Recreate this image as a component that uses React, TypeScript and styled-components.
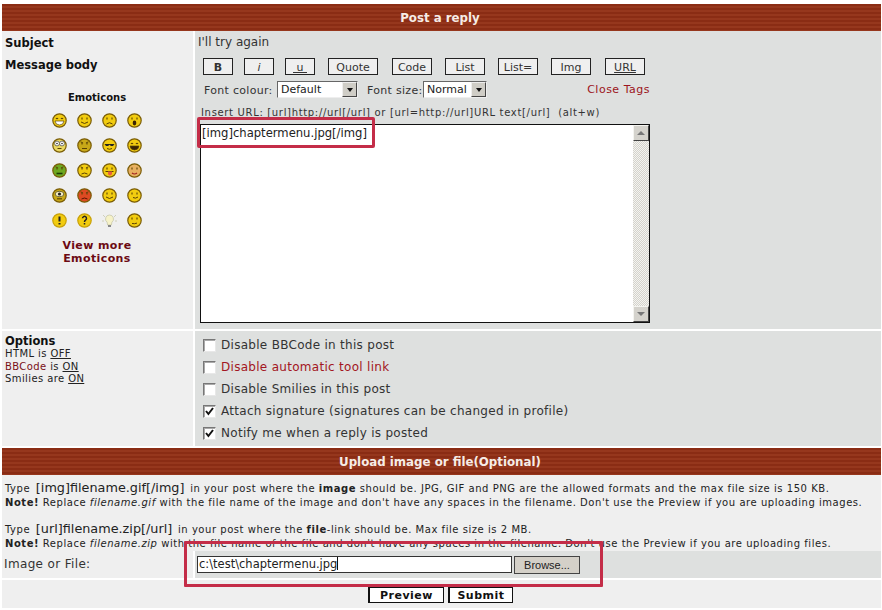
import React, { FC } from "react";
import styled, { createGlobalStyle } from "styled-components";

const GlobalStyle = createGlobalStyle`
  html, body {
    margin: 0;
    padding: 0;
    background: #ffffff;
  }
  body {
    font-family: "DejaVu Sans", Verdana, sans-serif;
    font-size: 11px;
    color: #222;
  }
`;

const Page = styled.div`
  position: relative;
  width: 882px;
  height: 610px;
  overflow: hidden;
  padding: 4px 1px 0 2px;
  box-sizing: border-box;
`;

const TitleBar = styled.div<{ $top?: number }>`
  height: 27px;
  margin-top: ${(p) => p.$top ?? 0}px;
  padding-right: 3px;
  display: flex;
  align-items: center;
  justify-content: center;
  color: #f6ece6;
  font-weight: 700;
  font-size: 11.8px;
  background: repeating-linear-gradient(to bottom, #8a2c14 0, #8a2c14 2px, #96371d 2px, #96371d 4px);
`;

const Row = styled.div<{ $height: number; $top?: number }>`
  display: grid;
  grid-template-columns: 191px 1fr;
  column-gap: 2px;
  height: ${(p) => p.$height}px;
  margin-top: ${(p) => p.$top ?? 0}px;
`;

const LeftCell = styled.div`
  background: #efefef;
  padding: 2px 3px;
  box-sizing: border-box;
  min-width: 0;
`;

const RightCell = styled.div`
  background: #dee0df;
  padding: 0 5px;
  box-sizing: border-box;
  min-width: 0;
`;

const RowLabel = styled.div`
  font-weight: 700;
  font-size: 11.5px;
  line-height: 18px;
  margin-top: 1px;
  color: #111;
`;

const SubjectValue = styled.div`
  font-size: 12px;
  line-height: 22px;
  margin-left: -2px;
  color: #333;
`;

const EmoticonPanel = styled.div`
  display: flex;
  flex-direction: column;
  align-items: center;
  padding-top: 17px;
  width: 184px;
`;

const EmoticonTitle = styled.div`
  font-weight: 700;
  font-size: 10px;
  line-height: 14px;
  color: #111;
`;

const EmoticonGrid = styled.div`
  display: grid;
  grid-template-columns: repeat(4, 15px);
  grid-auto-rows: 15px;
  column-gap: 10px;
  row-gap: 10px;
  margin-top: 8px;
`;

const MoreLink = styled.div`
  margin-top: 11px;
  text-align: center;
  font-weight: 700;
  font-size: 11px;
  line-height: 13px;
  letter-spacing: 0.4px;
  color: #6c0a14;
`;

const ButtonBar = styled.div`
  display: flex;
  align-items: center;
  height: 17px;
  margin: 5px 0 0 3px;
`;

const TagButton = styled.div<{ $width: number; $gap: number; $bold?: boolean; $under?: boolean; $italic?: boolean }>`
  box-sizing: border-box;
  width: ${(p) => p.$width}px;
  height: 17px;
  margin-right: ${(p) => p.$gap}px;
  padding-top: 1px;
  border: 1px solid #222;
  background: #efefef;
  display: flex;
  align-items: center;
  justify-content: center;
  font-size: 11px;
  color: #333;
  white-space: pre;
  font-weight: ${(p) => (p.$bold ? 700 : 400)};
  font-style: ${(p) => (p.$italic ? "italic" : "normal")};
  text-decoration: ${(p) => (p.$under ? "underline" : "none")};
`;

const FontRow = styled.div`
  display: flex;
  align-items: center;
  width: 446px;
  height: 17px;
  margin: 6px 0 0 4px;
  color: #333;
  font-size: 11px;
  letter-spacing: 0.3px;
`;

const FontLabel = styled.span<{ $width: number }>`
  width: ${(p) => p.$width}px;
  padding-top: 2px;
`;

const SelectBox = styled.div<{ $width: number; $gap: number }>`
  box-sizing: border-box;
  width: ${(p) => p.$width}px;
  height: 17px;
  margin-right: ${(p) => p.$gap}px;
  background: #fff;
  border: 1px solid;
  border-color: #666 #eee #eee #666;
  display: flex;
  align-items: center;
  justify-content: space-between;
  padding-left: 3px;
  color: #222;
  letter-spacing: 0;
`;

const SelectArrow = styled.span`
  box-sizing: border-box;
  width: 15px;
  height: 15px;
  background: #cfcdc6;
  border: 1px solid;
  border-color: #eee #444 #444 #eee;
  display: flex;
  align-items: center;
  justify-content: center;
  &::after {
    content: "";
    border-left: 3px solid transparent;
    border-right: 3px solid transparent;
    border-top: 4px solid #111;
  }
`;

const CloseTags = styled.span`
  margin-left: auto;
  letter-spacing: 0.5px;
  color: #9c1420;
`;

const HintLine = styled.div`
  margin: 8px 0 0 1px;
  font-size: 10px;
  line-height: 13px;
  letter-spacing: 0.67px;
  color: #333;
  white-space: pre;
`;

const EditorBox = styled.div`
  display: flex;
  box-sizing: border-box;
  width: 450px;
  height: 199px;
  margin-top: 5px;
  background: #fff;
  border: 1px solid #111;
`;

const EditorText = styled.div`
  flex: 1;
  padding: 1px 1px;
  font-size: 11.6px;
  line-height: 14px;
  color: #222;
`;

const ScrollTrack = styled.div`
  width: 16px;
  display: flex;
  flex-direction: column;
  justify-content: space-between;
  background-color: #eeeeea;
  background-image: repeating-conic-gradient(#d4d2cc 0 25%, #f4f4f0 0 50%);
  background-size: 2px 2px;
`;

const ScrollButton = styled.div<{ $up?: boolean }>`
  box-sizing: border-box;
  width: 16px;
  height: 16px;
  background: #d4d2cc;
  border: 1px solid;
  border-color: #f4f4f0 #444 #444 #f4f4f0;
  display: flex;
  align-items: center;
  justify-content: center;
  &::after {
    content: "";
    border-left: 4px solid transparent;
    border-right: 4px solid transparent;
    ${(p) => (p.$up ? "border-bottom: 4px solid #777;" : "border-top: 4px solid #777;")}
  }
`;

const OptionHead = styled.div`
  font-weight: 700;
  font-size: 11.5px;
  line-height: 14px;
  margin-top: 1px;
  color: #111;
`;

const OptionNote = styled.div`
  font-size: 10px;
  line-height: 12.5px;
  letter-spacing: 0.4px;
  color: #222;
`;

const Dark = styled.span`
  color: #7a1018;
`;

const CheckList = styled.div`
  padding: 3px 0 0 3px;
`;

const CheckRow = styled.div<{ $red?: boolean }>`
  display: flex;
  align-items: center;
  height: 22px;
  gap: 5px;
  font-size: 12px;
  letter-spacing: 0.29px;
  color: ${(p) => (p.$red ? "#a31622" : "#333")};
`;

const CheckBox = styled.span`
  box-sizing: border-box;
  width: 13px;
  height: 13px;
  background: #fff;
  border: 1px solid;
  border-color: #777 #e8e8e8 #e8e8e8 #777;
  box-shadow: inset 1px 1px 0 #aaa;
  display: flex;
  align-items: center;
  justify-content: center;
`;

const InfoBlock = styled.div`
  background: #efefef;
  height: 76px;
  padding: 6px 3px 0 3px;
  box-sizing: border-box;
  font-size: 10px;
  line-height: 13.5px;
  color: #222;
  letter-spacing: 0.54px;
`;

const InfoPara = styled.div`
  margin-bottom: 13px;
  white-space: nowrap;
`;

const Big = styled.span`
  font-size: 12.8px;
  letter-spacing: 0;
  margin: 0 2px;
`;

const FileLabel = styled.div`
  font-size: 12px;
  line-height: 23px;
  letter-spacing: 0.35px;
  margin-left: -1px;
  color: #333;
`;

const FileRow = styled.div`
  display: flex;
  align-items: center;
  height: 100%;
  gap: 2px;
  margin-left: -3px;
`;

const FileInput = styled.div`
  box-sizing: border-box;
  width: 315px;
  height: 17px;
  background: #fff;
  border: 1px solid #333;
  font-size: 11.5px;
  line-height: 15px;
  padding-left: 1px;
  color: #222;
  &::after {
    content: "";
    display: inline-block;
    width: 1px;
    height: 13px;
    background: #111;
    vertical-align: -2px;
  }
`;

const BrowseButton = styled.div`
  box-sizing: border-box;
  width: 66px;
  height: 18px;
  background: #d4d0c8;
  border: 1px solid #444;
  font-family: "Liberation Sans", Arial, sans-serif;
  font-size: 11px;
  line-height: 16px;
  text-align: center;
  color: #222;
`;

const SubmitRow = styled.div`
  background: #efefef;
  height: 28px;
  margin-top: 3px;
  padding-right: 2px;
  display: flex;
  justify-content: center;
  gap: 4px;
`;

const SubmitButton = styled.div<{ $width: number }>`
  box-sizing: border-box;
  width: ${(p) => p.$width}px;
  height: 16px;
  margin-top: 7px;
  background: #fff;
  border: 1px solid #111;
  border-left-width: 2px;
  display: flex;
  align-items: center;
  justify-content: center;
  font-weight: 700;
  font-size: 11px;
  letter-spacing: 0.5px;
  color: #111;
`;

const Callout = styled.div<{ $x: number; $y: number; $w: number; $h: number; $radius: number }>`
  position: absolute;
  left: ${(p) => p.$x}px;
  top: ${(p) => p.$y}px;
  width: ${(p) => p.$w}px;
  height: ${(p) => p.$h}px;
  box-sizing: border-box;
  border: 3px solid #c42d48;
  border-radius: ${(p) => p.$radius}px;
  pointer-events: none;
`;

type Mood =
  | "laugh" | "smile" | "sad" | "shock"
  | "eyes" | "puzzled" | "cool" | "grin"
  | "sick" | "frown" | "tongue" | "blush"
  | "cyclops" | "angry" | "glad" | "side"
  | "excl" | "quest" | "bulb" | "neutral";

const faceColors: Partial<Record<Mood, string>> = {
  sick: "#6ea820",
  angry: "#dd4a22",
  blush: "#e8b060",
  puzzled: "#c8a818",
  cyclops: "#c8a818",
  eyes: "#ead860",
};

const Smiley: FC<{ mood: Mood }> = ({ mood }) => {
  if (mood === "bulb") {
    return (
      <svg width="15" height="15" viewBox="0 0 15 15">
        <path d="M7.5 2a4 4 0 0 1 2.4 7.2L9.4 12H5.6l-.5-2.8A4 4 0 0 1 7.5 2z" fill="#f6f2c8" stroke="#c8c8a8" strokeWidth="0.8" />
        <rect x="6" y="12" width="3" height="2" fill="#888" />
        <path d="M1 2l2 2M14 2l-2 2M0 8h2M13 8h2" stroke="#c8c8a8" strokeWidth="0.8" />
      </svg>
    );
  }
  const fill = faceColors[mood] ?? "#f2cc10";
  const line = "#5a4204";
  const rim = mood === "excl" || mood === "quest" ? "#c8a008" : "#7a5c06";
  return (
    <svg width="15" height="15" viewBox="0 0 15 15">
      <circle cx="7.5" cy="7.5" r="6.7" fill={fill} stroke={rim} strokeWidth="1.2" />
      {mood === "excl" && <path d="M7.5 3.5v5M7.5 10v1.6" stroke="#222" strokeWidth="2" />}
      {mood === "quest" && <path d="M5.5 5.2a2 2 0 1 1 3 1.9c-.8.5-1 .9-1 1.8M7.5 10v1.6" stroke="#222" strokeWidth="1.5" fill="none" />}
      {mood === "eyes" && (
        <>
          <circle cx="5" cy="5.5" r="2.4" fill="#fff" stroke="#444" strokeWidth="0.7" />
          <circle cx="10" cy="5.5" r="2.4" fill="#fff" stroke="#444" strokeWidth="0.7" />
          <circle cx="5" cy="5.5" r="0.8" fill="#222" />
          <circle cx="10" cy="5.5" r="0.8" fill="#222" />
          <path d="M5.5 10.5h4" stroke={line} strokeWidth="1" />
        </>
      )}
      {mood === "cool" && (
        <>
          <path d="M2.5 6h10L11 8H9L7.5 6.8 6 8H4z" fill="#222" />
          <path d="M5 10.5q2.5 1.6 5 0" fill="none" stroke={line} strokeWidth="1" />
        </>
      )}
      {mood === "cyclops" && (
        <>
          <ellipse cx="7.5" cy="6" rx="4.2" ry="2.6" fill="#f4ecc0" stroke="#443" strokeWidth="0.7" />
          <circle cx="7.5" cy="6" r="1.6" fill="#222" />
          <path d="M5 10.8h5" stroke={line} strokeWidth="1.1" />
        </>
      )}
      {["smile", "sad", "shock", "puzzled", "laugh", "grin", "sick", "frown", "tongue", "blush", "angry", "glad", "side", "neutral"].includes(mood) && (
        <>
          <path d={mood === "laugh" || mood === "grin" ? "M4 6q1-1.6 2 0M9 6q1-1.6 2 0" : "M5 4.6v2M10 4.6v2"} stroke={line} strokeWidth="1.1" fill="none" />
          {(mood === "frown" || mood === "angry" || mood === "puzzled" || mood === "sick") && (
            <path d="M3.5 3.8l2.6 1.2M11.5 3.8L8.9 5" stroke={line} strokeWidth="0.9" />
          )}
        </>
      )}
      {mood === "smile" && <path d="M4 9q3.5 3 7 0" fill="none" stroke={line} strokeWidth="1" />}
      {mood === "glad" && <path d="M4 9q3.5 3 7 0" fill="none" stroke={line} strokeWidth="1" />}
      {mood === "sad" && <path d="M4.5 11q3-2.6 6 0" fill="none" stroke={line} strokeWidth="1" />}
      {mood === "frown" && <path d="M4.5 11q3-2 6 0" fill="none" stroke={line} strokeWidth="1" />}
      {mood === "angry" && <path d="M4.5 11q3-2 6 0" fill="none" stroke="#5a1404" strokeWidth="1" />}
      {mood === "sick" && <path d="M4.5 10.5h6" stroke="#1e3c06" strokeWidth="1.6" />}
      {mood === "shock" && <ellipse cx="7.5" cy="10" rx="1.8" ry="2.4" fill="#3a2404" />}
      {mood === "puzzled" && <path d="M5 10.5h5" stroke={line} strokeWidth="1" />}
      {mood === "neutral" && <path d="M5 10.5q2.5 .6 5-.4" fill="none" stroke={line} strokeWidth="1" />}
      {mood === "side" && <path d="M6 9.5q2.5 1.5 5-.5" fill="none" stroke={line} strokeWidth="1" />}
      {(mood === "laugh" || mood === "grin") && (
        <path d="M3 8h9q-.5 4-4.5 4T3 8z" fill={mood === "laugh" ? "#fff" : "#3a2404"} stroke={line} strokeWidth="0.7" />
      )}
      {mood === "tongue" && (
        <>
          <path d="M3.5 8.5h8" stroke={line} strokeWidth="1" />
          <path d="M6 8.5h4v2a2 2 0 0 1-4 0z" fill="#e8603c" />
        </>
      )}
      {mood === "blush" && <path d="M5 10q2.5 2 5 0" fill="none" stroke="#a02020" strokeWidth="1.2" />}
    </svg>
  );
};

const moods: Mood[] = [
  "laugh", "smile", "sad", "shock",
  "eyes", "puzzled", "cool", "grin",
  "sick", "frown", "tongue", "blush",
  "cyclops", "angry", "glad", "side",
  "excl", "quest", "bulb", "neutral",
];

const tagButtons = [
  { label: "B", width: 30, gap: 11, bold: true },
  { label: "i", width: 30, gap: 11, italic: true },
  { label: " u ", width: 30, gap: 13, under: true },
  { label: "Quote", width: 50, gap: 14 },
  { label: "Code", width: 40, gap: 13 },
  { label: "List", width: 40, gap: 13 },
  { label: "List=", width: 40, gap: 13 },
  { label: "Img", width: 40, gap: 14 },
  { label: "URL", width: 40, gap: 0, under: true },
];

const Tick = () => (
  <svg width="9" height="9" viewBox="0 0 9 9">
    <path d="M1 4l2.4 3L8 1" fill="none" stroke="#111" strokeWidth="2" />
  </svg>
);

const options = [
  { label: "Disable BBCode in this post", checked: false },
  { label: "Disable automatic tool link", checked: false, red: true },
  { label: "Disable Smilies in this post", checked: false },
  { label: "Attach signature (signatures can be changed in profile)", checked: true },
  { label: "Notify me when a reply is posted", checked: true },
];

export default function App() {
  return (
    <Page>
      <GlobalStyle />
      <TitleBar>Post a reply</TitleBar>
      <Row $height={21}>
        <LeftCell>
          <RowLabel>Subject</RowLabel>
        </LeftCell>
        <RightCell>
          <SubjectValue>I'll try again</SubjectValue>
        </RightCell>
      </Row>
      <Row $height={276} $top={1}>
        <LeftCell>
          <RowLabel>Message body</RowLabel>
          <EmoticonPanel>
            <EmoticonTitle>Emoticons</EmoticonTitle>
            <EmoticonGrid>
              {moods.map((m) => (
                <Smiley key={m} mood={m} />
              ))}
            </EmoticonGrid>
            <MoreLink>
              View more
              <br />
              Emoticons
            </MoreLink>
          </EmoticonPanel>
        </LeftCell>
        <RightCell>
          <ButtonBar>
            {tagButtons.map((b) => (
              <TagButton key={b.label} $width={b.width} $gap={b.gap} $bold={b.bold} $under={b.under} $italic={b.italic}>
                {b.label}
              </TagButton>
            ))}
          </ButtonBar>
          <FontRow>
            <FontLabel $width={73}>Font colour:</FontLabel>
            <SelectBox $width={81} $gap={9}>
              Default
              <SelectArrow />
            </SelectBox>
            <FontLabel $width={56}>Font size:</FontLabel>
            <SelectBox $width={64} $gap={0}>
              Normal
              <SelectArrow />
            </SelectBox>
            <CloseTags>Close Tags</CloseTags>
          </FontRow>
          <HintLine>Insert URL: [url]http://url[/url] or [url=http://url]URL text[/url]  (alt+w)</HintLine>
          <EditorBox>
            <EditorText>[img]chaptermenu.jpg[/img]</EditorText>
            <ScrollTrack>
              <ScrollButton $up />
              <ScrollButton />
            </ScrollTrack>
          </EditorBox>
        </RightCell>
      </Row>
      <Row $height={115} $top={2}>
        <LeftCell>
          <OptionHead>Options</OptionHead>
          <OptionNote>
            HTML is <u>OFF</u>
          </OptionNote>
          <OptionNote>
            <Dark>BBCode</Dark> is <u>ON</u>
          </OptionNote>
          <OptionNote>
            Smilies are <u>ON</u>
          </OptionNote>
        </LeftCell>
        <RightCell>
          <CheckList>
            {options.map((o) => (
              <CheckRow key={o.label} $red={o.red}>
                <CheckBox>{o.checked && <Tick />}</CheckBox>
                {o.label}
              </CheckRow>
            ))}
          </CheckList>
        </RightCell>
      </Row>
      <TitleBar $top={2}>Upload image or file(Optional)</TitleBar>
      <InfoBlock>
        <InfoPara>
          Type <Big>[img]filename.gif[/img]</Big> in your post where the <b>image</b> should be. JPG, GIF and PNG are the
          allowed formats and the max file size is 150 KB.
          <br />
          <b>Note!</b> Replace <i>filename.gif</i> with the file name of the image and don't have any spaces in the
          filename. Don't use the Preview if you are uploading images.
        </InfoPara>
        <InfoPara>
          Type <Big>[url]filename.zip[/url]</Big> in your post where the <b>file</b>-link should be. Max file size is 2 MB.
          <br />
          <b>Note!</b> Replace <i>filename.zip</i> with the file name of the file and don't have any spaces in the
          filename. Don't use the Preview if you are uploading files.
        </InfoPara>
      </InfoBlock>
      <Row $height={26}>
        <LeftCell>
          <FileLabel>Image or File:</FileLabel>
        </LeftCell>
        <RightCell>
          <FileRow>
            <FileInput>c:\test\chaptermenu.jpg</FileInput>
            <BrowseButton>Browse...</BrowseButton>
          </FileRow>
        </RightCell>
      </Row>
      <SubmitRow>
        <SubmitButton $width={76}>Preview</SubmitButton>
        <SubmitButton $width={65}>Submit</SubmitButton>
      </SubmitRow>
      <Callout $x={197} $y={117} $w={178} $h={31} $radius={2} />
      <Callout $x={184} $y={541} $w={419} $h={46} $radius={1} />
    </Page>
  );
}
